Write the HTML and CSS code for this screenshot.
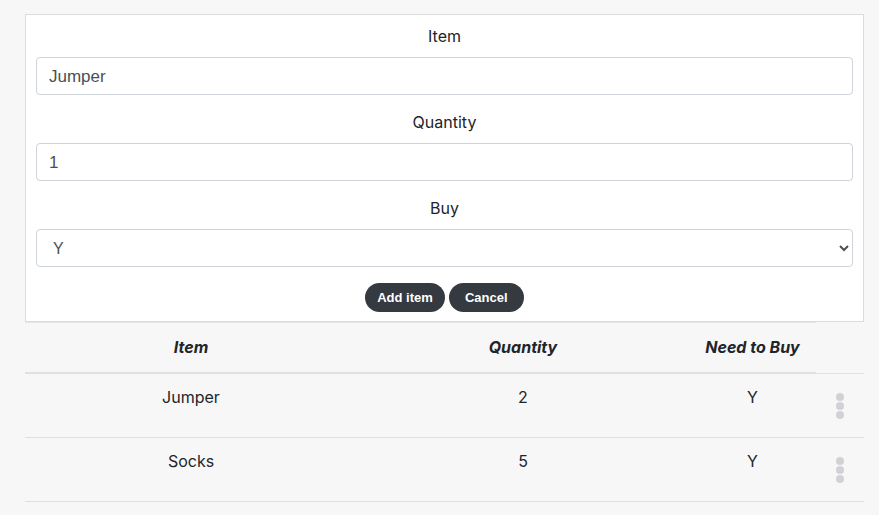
FILE: index.html
```html
<!DOCTYPE html>
<html>
<head>
<meta charset="utf-8">
<link rel="stylesheet" href="styles.css">
</head>
<body>
<div class="page">
  <form class="card">
    <div class="group">
      <label class="label">Item</label>
      <input class="field" type="text" value="Jumper">
    </div>
    <div class="group">
      <label class="label">Quantity</label>
      <input class="field" type="text" value="1">
    </div>
    <div class="group">
      <label class="label">Buy</label>
      <select class="field select"><option>Y</option><option>N</option></select>
    </div>
    <div class="actions">
      <button type="button" class="btn">Add item</button>
      <button type="button" class="btn">Cancel</button>
    </div>
  </form>
  <table class="list">
    <colgroup>
      <col class="c1"><col class="c2"><col class="c3"><col class="c4">
    </colgroup>
    <thead>
      <tr><th>Item</th><th>Quantity</th><th>Need to Buy</th></tr>
    </thead>
    <tbody>
      <tr><td>Jumper</td><td>2</td><td>Y</td><td class="menu"><span class="dots"><i></i><i></i><i></i></span></td></tr>
      <tr><td>Socks</td><td>5</td><td>Y</td><td class="menu"><span class="dots"><i></i><i></i><i></i></span></td></tr>
    </tbody>
  </table>
</div>
</body>
</html>
```
FILE: styles.css
```css
html, body {
  margin: 0;
  padding: 0;
  background: #f7f7f8;
  font-family: "Inter", "Liberation Sans", sans-serif;
  color: #212529;
}
.page {
  padding: 14px 15px 0 25px;
}
.card {
  background: #fff;
  border: 1px solid #dcdcde;
  padding: 10px 10px 9px 10px;
  margin: 0;
}
.group {
  display: flex;
  flex-direction: column;
  margin-bottom: 16px;
}
.label {
  text-align: center;
  font-size: 16px;
  line-height: 23px;
  margin-bottom: 9px;
}
.field {
  box-sizing: border-box;
  height: 38px;
  border: 1px solid #ced4da;
  border-radius: 4px;
  padding: 2px 12px 0;
  font-family: "Liberation Sans", Arial, sans-serif;
  font-size: 17px;
  color: #495057;
  background: #fff;
  outline: none;
}
.select {
  padding: 0 8px 0 12px;
  font-size: 16px;
}
.actions {
  display: flex;
  justify-content: center;
  gap: 4px;
}
.btn {
  height: 29px;
  min-width: 75px;
  border: none;
  border-radius: 15px;
  background: #343a40;
  color: #fff;
  font-family: "Liberation Sans", Arial, sans-serif;
  font-weight: bold;
  font-size: 13px;
  padding: 0 12px;
}
.list {
  width: 100%;
  border-collapse: collapse;
  table-layout: fixed;
  font-size: 16px;
}
.c1, .c2 { width: 332px; }
.c3 { width: 127px; }
.c4 { width: 48px; }
.list th {
  font-weight: bold;
  font-style: italic;
  text-align: center;
  padding: 12px 0 13px;
  line-height: 24px;
  border-top: 1px solid #e6e6e8;
  border-bottom: 2px solid #dee0e3;
}
.list td {
  text-align: center;
  vertical-align: top;
  padding: 12px 0;
  line-height: 22px;
  border-bottom: 1px solid #dee0e3;
}
.list tbody tr:first-child td {
  border-top: 1px solid #e2e3e6;
}
.list td.menu {
  padding: 19px 0 18px;
  line-height: 0;
}
.dots {
  display: inline-flex;
  flex-direction: column;
  gap: 1px;
  vertical-align: top;
}
.dots i {
  display: block;
  width: 8px;
  height: 8px;
  border-radius: 50%;
  background: #d2d2d6;
}
```
